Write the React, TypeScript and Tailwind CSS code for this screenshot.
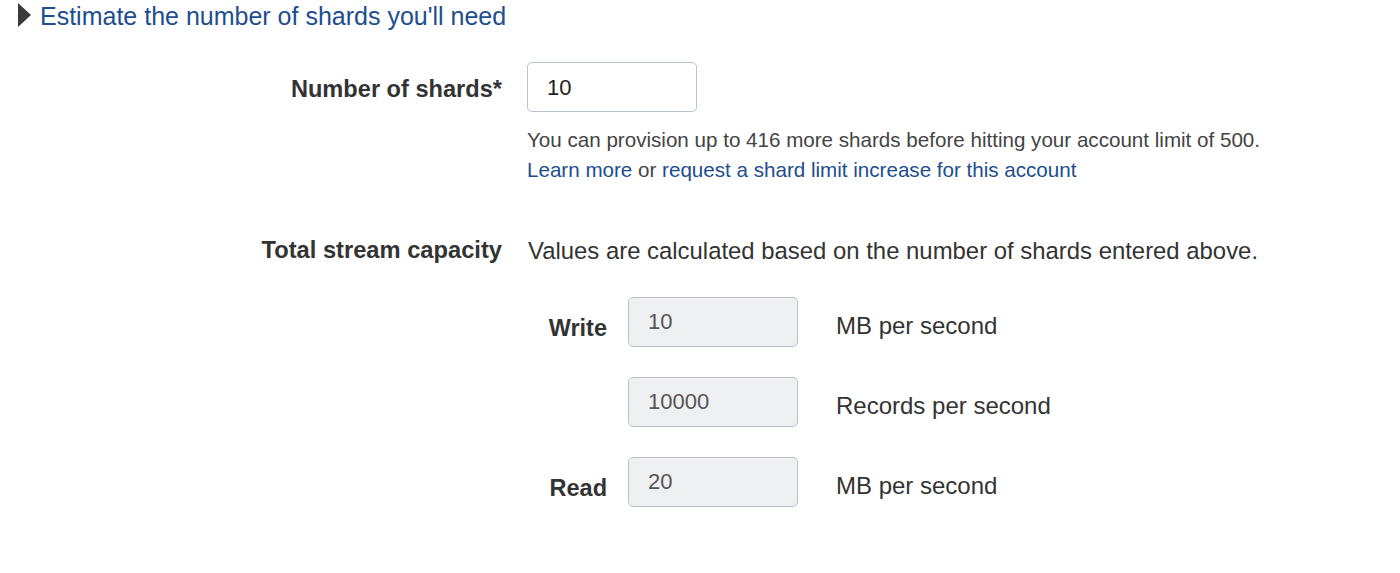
import React from "react";

const font = { fontFamily: '"Liberation Sans", Arial, Helvetica, sans-serif' };

function Caret() {
  return (
    <svg width="15" height="26" viewBox="0 0 15 26" className="shrink-0">
      <polygon points="1,1 14,13 1,25" fill="#3a3a3a" />
    </svg>
  );
}

function CapRow({ label, value, unit }: { label: string; value: string; unit: string }) {
  return (
    <div className="flex items-center">
      <div className="w-[79px] text-right text-[23.5px] font-bold text-[#333] pt-[13px]">{label}</div>
      <div className="ml-[21px] w-[170px] h-[50px] rounded-[5px] border border-[#b9c2cb] bg-[#eef0f2] flex items-center pl-[19px] pb-[1px] text-[22px] text-[#555]">
        {value}
      </div>
      <div className="ml-[38px] text-[24px] text-[#333] pt-[8px]">{unit}</div>
    </div>
  );
}

export default function App() {
  return (
    <div className="w-[1400px] h-[573px] bg-white overflow-hidden" style={font}>
      <div className="flex items-center pl-[17px] pt-[3px] h-[26px] gap-[8px]">
        <Caret />
        <span className="text-[25px] text-[#1d4e8f] leading-none pt-[3px]">Estimate the number of shards you'll need</span>
      </div>

      <div className="mt-[36px] flex">
        <div className="w-[502px] text-right text-[23.6px] font-bold text-[#333] pt-[10px]">Number of shards*</div>
        <div className="ml-[25px]">
          <div className="w-[170px] h-[50px] rounded-[5px] border border-[#b9c2cb] bg-white flex items-center pl-[19px] text-[22px] text-[#222]">
            10
          </div>
          <div className="mt-[13px] text-[20.6px] leading-[30px] text-[#444]">
            You can provision up to 416 more shards before hitting your account limit of 500.
          </div>
          <div className="text-[20.6px] leading-[30px] text-[#444]">
            <span className="text-[#1d4e8f]">Learn more</span> or{" "}
            <span className="text-[#1d4e8f]">request a shard limit increase for this account</span>
          </div>
        </div>
      </div>

      <div className="mt-[48px] flex">
        <div className="w-[502px] text-right text-[23.7px] font-bold text-[#333]">Total stream capacity</div>
        <div className="ml-[26px] text-[23.9px] text-[#333]">
          Values are calculated based on the number of shards entered above.
        </div>
      </div>

      <div className="mt-[28px] ml-[528px] flex flex-col gap-[30px]">
        <CapRow label="Write" value="10" unit="MB per second" />
        <CapRow label="" value="10000" unit="Records per second" />
        <CapRow label="Read" value="20" unit="MB per second" />
      </div>
    </div>
  );
}
